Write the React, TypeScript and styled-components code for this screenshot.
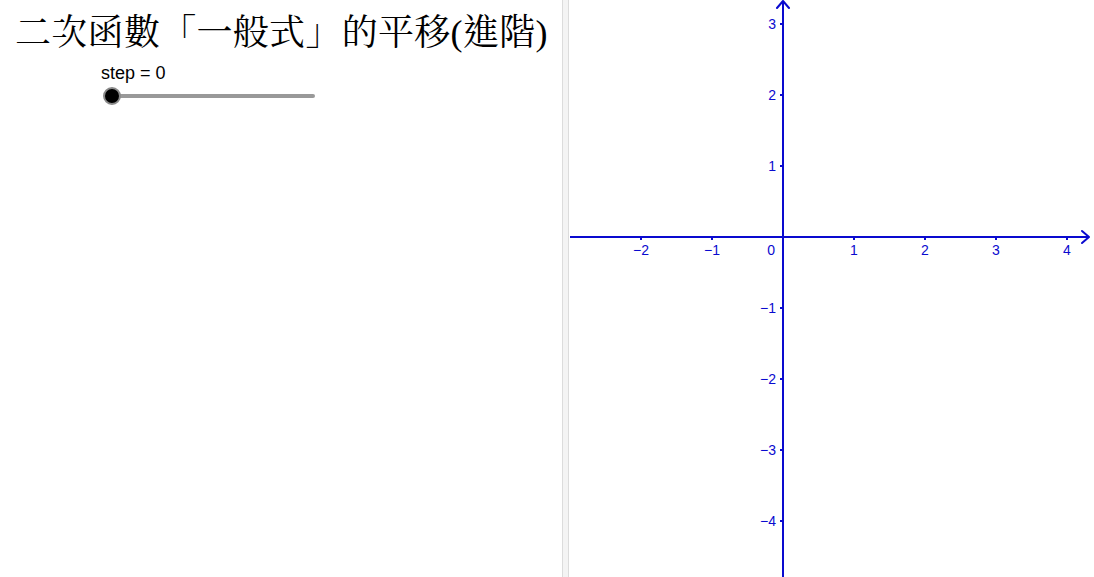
import React from "react";
import styled, { createGlobalStyle } from "styled-components";

const AXIS = "#0a0acf";
const UNIT = 71;
const ORIGIN_X = 214;
const ORIGIN_Y = 237;

const GlobalStyle = createGlobalStyle`
  html, body {
    margin: 0;
    padding: 0;
    background: #ffffff;
  }
  body {
    font-family: "Liberation Sans", Arial, sans-serif;
  }
`;

const Page = styled.div`
  display: flex;
  flex-direction: row;
  width: 1094px;
  height: 577px;
  overflow: hidden;
  background: #ffffff;
`;

const AlgebraPanel = styled.section`
  width: 562px;
  flex-shrink: 0;
  display: flex;
  flex-direction: column;
`;

const Title = styled.h1`
  margin: 0;
  padding: 12px 0 0 15px;
  font-family: "Liberation Serif", "Noto Serif CJK TC", "Noto Sans CJK TC", serif;
  font-weight: normal;
  font-size: 36px;
  line-height: 42px;
  letter-spacing: 0.3px;
  color: #000000;
  white-space: nowrap;
`;

const SliderBlock = styled.div`
  display: flex;
  flex-direction: column;
  gap: 11px;
  padding: 9px 0 0 101px;
`;

const SliderLabel = styled.span`
  font-size: 18px;
  line-height: 20px;
  color: #000000;
`;

const Track = styled.div`
  position: relative;
  margin-left: 11px;
  width: 203px;
  height: 4px;
  border-radius: 2px;
  background: #999999;
`;

const Knob = styled.div`
  position: absolute;
  left: -9px;
  top: -7px;
  width: 14px;
  height: 14px;
  border-radius: 50%;
  background: #000000;
  border: 2px solid #8a8a8a;
`;

const Splitter = styled.div`
  width: 5px;
  flex-shrink: 0;
  background: #f4f4f4;
  border-left: 1px solid #dcdcdc;
  border-right: 1px solid #dcdcdc;
`;

const GraphPanel = styled.section`
  flex: 1;
  position: relative;
  background: #ffffff;
`;

const Canvas = styled.svg`
  display: block;
  width: 525px;
  height: 577px;
`;

const xTicks = [-2, -1, 1, 2, 3, 4];
const yTicks = [3, 2, 1, -1, -2, -3, -4];

const fmt = (n: number) => (n < 0 ? `\u2212${Math.abs(n)}` : `${n}`);

const Axes: React.FC = () => (
  <Canvas viewBox="0 0 525 577">
    <g stroke={AXIS} strokeWidth={2} fill="none">
      <line x1={1} y1={ORIGIN_Y} x2={520} y2={ORIGIN_Y} />
      <polyline points={`513,${ORIGIN_Y - 6} 520,${ORIGIN_Y} 513,${ORIGIN_Y + 6}`} strokeLinecap="round" strokeLinejoin="round" />
      <line x1={ORIGIN_X} y1={1} x2={ORIGIN_X} y2={577} />
      <polyline points={`${ORIGIN_X - 6},8 ${ORIGIN_X},1 ${ORIGIN_X + 6},8`} strokeLinecap="round" strokeLinejoin="round" />
      {xTicks.map((k) => (
        <line key={`xt${k}`} x1={ORIGIN_X + k * UNIT} y1={ORIGIN_Y} x2={ORIGIN_X + k * UNIT} y2={ORIGIN_Y + 3} />
      ))}
      {yTicks.map((k) => (
        <line key={`yt${k}`} x1={ORIGIN_X - 3} y1={ORIGIN_Y - k * UNIT} x2={ORIGIN_X} y2={ORIGIN_Y - k * UNIT} />
      ))}
    </g>
    <g fill={AXIS} fontFamily="'Liberation Sans', Arial, sans-serif" fontSize={14}>
      {xTicks.map((k) => (
        <text key={`xl${k}`} x={ORIGIN_X + k * UNIT} y={ORIGIN_Y + 18} textAnchor="middle">
          {fmt(k)}
        </text>
      ))}
      <text x={ORIGIN_X - 8} y={ORIGIN_Y + 18} textAnchor="end">0</text>
      {yTicks.map((k) => (
        <text key={`yl${k}`} x={ORIGIN_X - 7} y={ORIGIN_Y - k * UNIT + 5} textAnchor="end">
          {fmt(k)}
        </text>
      ))}
    </g>
  </Canvas>
);

const App: React.FC = () => (
  <>
    <GlobalStyle />
    <Page>
      <AlgebraPanel>
        <Title>二次函數「一般式」的平移(進階)</Title>
        <SliderBlock>
          <SliderLabel>step = 0</SliderLabel>
          <Track>
            <Knob />
          </Track>
        </SliderBlock>
      </AlgebraPanel>
      <Splitter />
      <GraphPanel>
        <Axes />
      </GraphPanel>
    </Page>
  </>
);

export default App;
